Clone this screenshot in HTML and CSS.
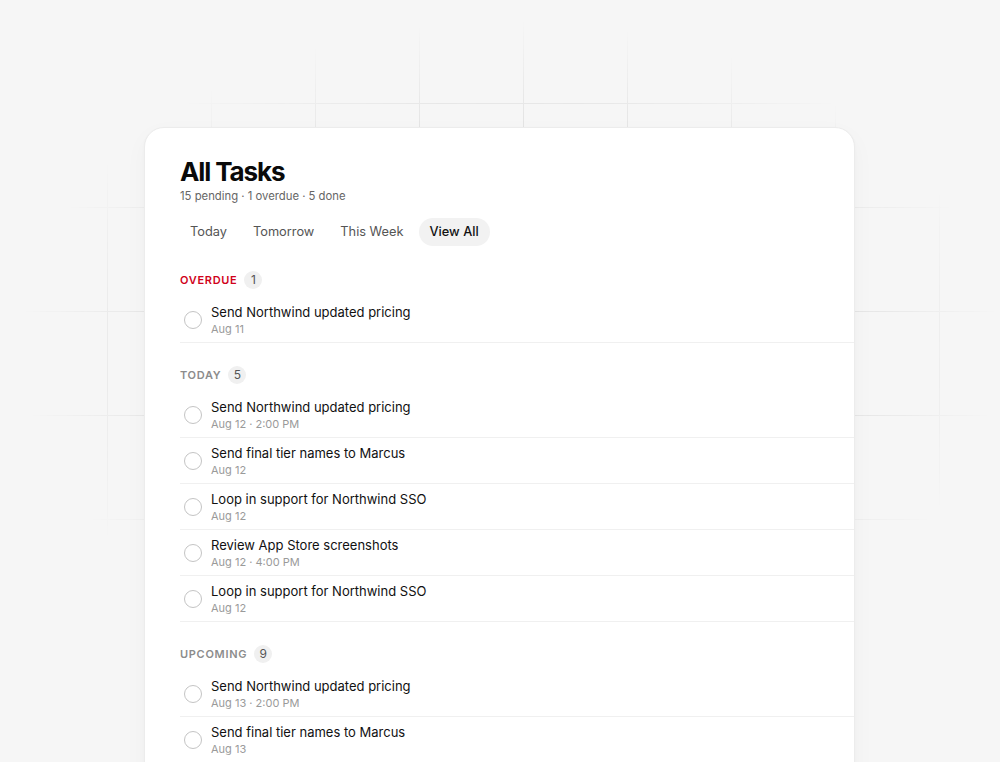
FILE: index.html
```html
<!DOCTYPE html>
<html lang="en">
<head>
<meta charset="utf-8">
<title>All Tasks</title>
<link rel="stylesheet" href="styles.css">
</head>
<body>
<div class="grid-bg"></div>
<main class="card">
  <header class="head">
    <h1 class="title">All Tasks</h1>
    <p class="subtitle">15 pending · 1 overdue · 5 done</p>
  </header>
  <nav class="tabs">
    <span class="tab">Today</span>
    <span class="tab">Tomorrow</span>
    <span class="tab">This Week</span>
    <span class="tab active">View All</span>
  </nav>

  <section class="section">
    <div class="sec-head"><span class="sec-label red">Overdue</span><span class="badge">1</span></div>
    <ul class="list">
      <li class="row"><span class="check"></span><div class="txt"><div class="t">Send Northwind updated pricing</div><div class="d">Aug 11</div></div></li>
    </ul>
  </section>

  <section class="section">
    <div class="sec-head"><span class="sec-label">Today</span><span class="badge">5</span></div>
    <ul class="list">
      <li class="row"><span class="check"></span><div class="txt"><div class="t">Send Northwind updated pricing</div><div class="d">Aug 12 · 2:00 PM</div></div></li>
      <li class="row"><span class="check"></span><div class="txt"><div class="t">Send final tier names to Marcus</div><div class="d">Aug 12</div></div></li>
      <li class="row"><span class="check"></span><div class="txt"><div class="t">Loop in support for Northwind SSO</div><div class="d">Aug 12</div></div></li>
      <li class="row"><span class="check"></span><div class="txt"><div class="t">Review App Store screenshots</div><div class="d">Aug 12 · 4:00 PM</div></div></li>
      <li class="row"><span class="check"></span><div class="txt"><div class="t">Loop in support for Northwind SSO</div><div class="d">Aug 12</div></div></li>
    </ul>
  </section>

  <section class="section">
    <div class="sec-head"><span class="sec-label">Upcoming</span><span class="badge">9</span></div>
    <ul class="list">
      <li class="row"><span class="check"></span><div class="txt"><div class="t">Send Northwind updated pricing</div><div class="d">Aug 13 · 2:00 PM</div></div></li>
      <li class="row"><span class="check"></span><div class="txt"><div class="t">Send final tier names to Marcus</div><div class="d">Aug 13</div></div></li>
    </ul>
  </section>
</main>
</body>
</html>
```

FILE: styles.css
```css
* { box-sizing: border-box; }
html, body { margin: 0; padding: 0; height: 100%; }
body {
  background: #f6f6f6;
  font-family: Inter, "Liberation Sans", Arial, sans-serif;
  color: #111;
  overflow: hidden;
  position: relative;
}
.grid-bg {
  position: absolute;
  inset: 0;
  background-image:
    linear-gradient(to right, #d2d2d2 1px, transparent 1px),
    linear-gradient(to bottom, #d2d2d2 1px, transparent 1px);
  background-size: 104px 104px;
  background-position: 3px -1px;
  -webkit-mask-image: radial-gradient(ellipse 490px 330px at 510px 350px, rgba(0,0,0,0.9) 45%, transparent 100%);
  mask-image: radial-gradient(ellipse 490px 330px at 510px 350px, rgba(0,0,0,0.9) 45%, transparent 100%);
  z-index: 0;
}
.card {
  position: relative;
  z-index: 1;
  width: 711px;
  margin: 127px 0 0 144px;
  min-height: 800px;
  background: #fff;
  border: 1px solid #ececec;
  border-radius: 20px;
  box-shadow: 0 1px 3px rgba(0,0,0,0.03), 0 8px 24px rgba(0,0,0,0.03);
  padding: 28px 0 0 35px;
}
.title {
  margin: 0;
  font-size: 26px;
  line-height: 32px;
  font-weight: 700;
  letter-spacing: -1.1px;
  color: #0a0a0a;
}
.subtitle {
  margin: 0;
  font-size: 11.3px;
  line-height: 16px;
  color: #666;
}
.tabs {
  display: flex;
  gap: 4px;
  margin-top: 14px;
  margin-left: -1px;
}
.tab {
  height: 28px;
  line-height: 28px;
  padding: 0 11px;
  border-radius: 14px;
  font-size: 12.8px;
  color: #555;
}
.tab.active {
  background: #f2f2f2;
  color: #111;
  font-weight: 500;
}
.section { margin-top: 23px; }
.section:first-of-type { margin-top: 25px; }
.sec-head {
  display: flex;
  align-items: center;
  height: 18px;
  margin-bottom: 8px;
}
.sec-label {
  font-size: 11px;
  font-weight: 600;
  letter-spacing: 0.7px;
  text-transform: uppercase;
  color: #8c8c8c;
}
.sec-label.red { color: #d0021b; }
.badge {
  margin-left: 7px;
  min-width: 18px;
  height: 18px;
  padding: 0 5px;
  border-radius: 9px;
  background: #f0f0f0;
  color: #555;
  font-size: 12px;
  line-height: 18px;
  text-align: center;
}
.list { list-style: none; margin: 0; padding: 0; }
.row {
  display: flex;
  align-items: center;
  padding: 6px 0 5px 4px;
  border-bottom: 1px solid #f0f0f0;
}
.check {
  flex: none;
  width: 18px;
  height: 18px;
  border: 1.5px solid #c4c4c4;
  border-radius: 50%;
  margin-right: 9px;
}
.t {
  font-size: 13px;
  line-height: 18px;
  color: #111;
}
.d {
  font-size: 11px;
  line-height: 16px;
  color: #9a9a9a;
}
```
